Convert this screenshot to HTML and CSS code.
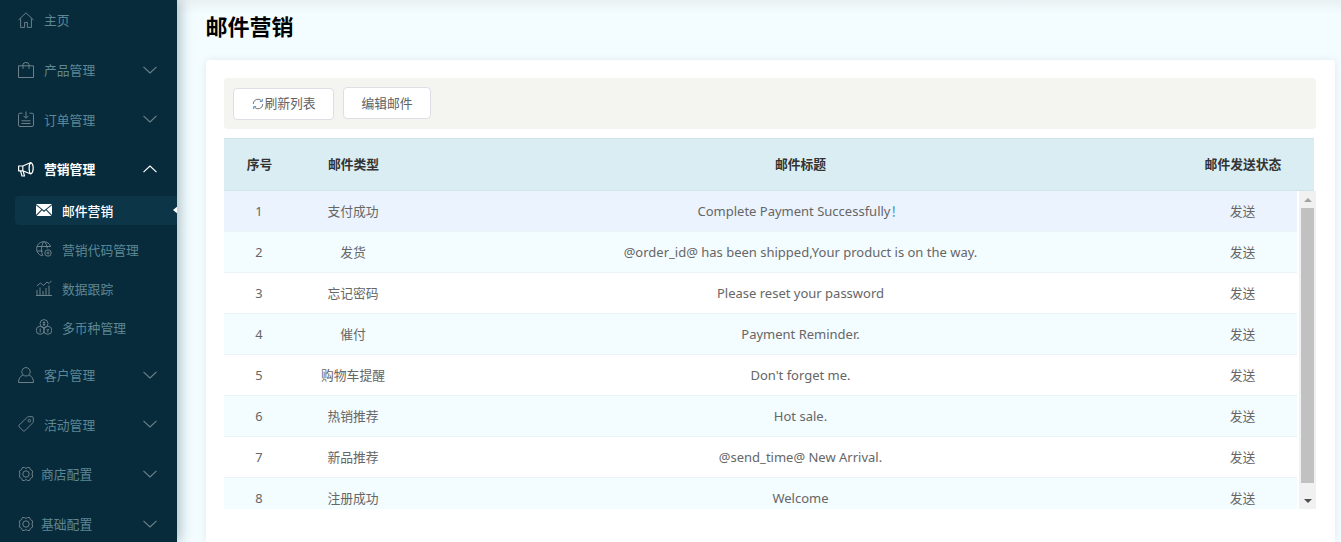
FILE: index.html
```html
<!DOCTYPE html>
<html lang="zh-CN">
<head>
  <meta charset="UTF-8">
  <title>邮件营销</title>
  <link rel="stylesheet" href="styles.css">
</head>
<body>

<div class="sidebar">
  <ul class="menu">
    <li class="menu-item">
      <svg class="icon" viewBox="0 0 16 16"><path d="M.5 8 8 .8 15.500 8M2.600 6.400v9h4v-5h2.800v5h4v-9"/></svg>
      <span>主页</span>
    </li>
    <li class="menu-item">
      <svg class="icon" viewBox="0 0 16 16"><path d="M.5 3.800h15v11.700H.5zM5 6.800V2.500Q5 .5 8 .5t3 2v4.300"/></svg>
      <span>产品管理</span>
      <svg class="arrow" viewBox="0 0 14 8"><path d="M.5.800 7 7 13.500.800"/></svg>
    </li>
    <li class="menu-item">
      <svg class="icon" viewBox="0 0 16 16"><path d="M4.500 2.200H2Q.5 2.200.5 3.600v10.500q0 1.400 1.500 1.400h12q1.500 0 1.500-1.400V3.600q0-1.400-1.500-1.400h-2.500M8 .5v6.500M5.500 4.800 8 7.300l2.500-2.500M3.500 9.800h9M3.500 12.500h9"/></svg>
      <span>订单管理</span>
      <svg class="arrow" viewBox="0 0 14 8"><path d="M.5.800 7 7 13.500.800"/></svg>
    </li>
    <li class="menu-item open">
      <svg class="icon" viewBox="0 0 16 16"><path d="M.6 5h4.200v4.800H.6zM4.800 5l8-3.500q2.400 1.400 2.400 5.700t-2.400 5.800l-8-3.200zM12.800 1.500q-1.700 1.400-1.700 5.700t1.700 5.800M2.500 9.800 4 15h2.500L5.200 10.200"/></svg>
      <span>营销管理</span>
      <svg class="arrow" viewBox="0 0 14 8"><path d="M.5 7.200 7 1l6.500 6.200"/></svg>
    </li>
    <ul class="submenu">
      <li class="sub-item active">
        <svg class="sub-icon" viewBox="0 0 16 12"><path class="fill" d="M0 0h16L8 6.500zM0 1.300v9.700l5.300-5.400zM16 1.300v9.700l-5.300-5.400zM6 6.300 8 8l2-1.700 5.400 5.700H.6z"/></svg>
        <span>邮件营销</span>
      </li>
      <li class="sub-item">
        <svg class="sub-icon" viewBox="0 0 16 16"><path d="M14.800 6A7.200 7.200 0 1 0 6 14.800M.8 5.500h13.400M.8 10h6M7.500.8Q3.500 8 7 15M8.500.8q2.500 2.500 2.800 6.500"/><circle cx="12" cy="12" r="3.200"/><circle cx="12" cy="12" r="1"/></svg>
        <span>营销代码管理</span>
      </li>
      <li class="sub-item">
        <svg class="sub-icon" viewBox="0 0 16 16"><path d="M0 15.500h16M1 15v-5M4 15V7.500M7 15v-4M10 15V8M13 15V5.500M.8 6l3.700-3 3 2.500L11 2l2 1.500L15.500.8"/></svg>
        <span>数据跟踪</span>
      </li>
      <li class="sub-item">
        <svg class="sub-icon" viewBox="0 0 16 16"><circle cx="8" cy="4.600" r="4"/><circle cx="4.200" cy="11.300" r="4"/><circle cx="11.800" cy="11.300" r="4"/><path d="M6.800 3.500h2.400M6.800 5.500h2.400M8 2.500v4.500M4.200 9.500v4M10.800 10l1 1.500 1-1.500M11.800 11.500v2"/></svg>
        <span>多币种管理</span>
      </li>
    </ul>
    <li class="menu-item">
      <svg class="icon" viewBox="0 0 16 16"><circle cx="8" cy="4.800" r="4.200"/><path d="M5 8q-4.500 2-4.500 7.500h15Q15.500 10 11 8"/></svg>
      <span>客户管理</span>
      <svg class="arrow" viewBox="0 0 14 8"><path d="M.5.800 7 7 13.500.800"/></svg>
    </li>
    <li class="menu-item">
      <svg class="icon" viewBox="0 0 16 16"><path d="M1 9.200 9.300 1.200q.5-.5 1.200-.5h3.700q1.100 0 1.100 1.100v3.700q0 .7-.5 1.200L6.800 14.800q-.8.800-1.600 0L1 10.700q-.7-.7 0-1.500z"/><circle cx="11.300" cy="4.700" r="1.300"/></svg>
      <span>活动管理</span>
      <svg class="arrow" viewBox="0 0 14 8"><path d="M.5.800 7 7 13.500.800"/></svg>
    </li>
    <li class="menu-item tight">
      <svg class="icon" viewBox="0 0 16 16"><path class="gear" d="M4.500 1.500h2l1.500 1 1.500-1h2l1 2.200 2.200 1.300-.6 3 .6 3-2.200 1.300-1 2.200h-2l-1.500-1-1.500 1h-2l-1-2.200L1.300 11l.6-3-.6-3 2.200-1.300z"/><circle cx="8" cy="8" r="3.200"/></svg>
      <span>商店配置</span>
      <svg class="arrow" viewBox="0 0 14 8"><path d="M.5.800 7 7 13.500.800"/></svg>
    </li>
    <li class="menu-item tight">
      <svg class="icon" viewBox="0 0 16 16"><path class="gear" d="M4.500 1.500h2l1.500 1 1.500-1h2l1 2.200 2.200 1.300-.6 3 .6 3-2.200 1.300-1 2.200h-2l-1.500-1-1.500 1h-2l-1-2.200L1.300 11l.6-3-.6-3 2.200-1.300z"/><circle cx="8" cy="8" r="3.200"/></svg>
      <span>基础配置</span>
      <svg class="arrow" viewBox="0 0 14 8"><path d="M.5.800 7 7 13.500.800"/></svg>
    </li>
  </ul>
</div>

<div class="main">
  <h1 class="page-title">邮件营销</h1>

  <div class="card">
    <div class="toolbar">
      <button class="btn first">
        <svg class="refresh" viewBox="0 0 12 12"><path d="M1.200 6a4.800 4.800 0 0 1 8.300-3.300"/><path d="M10.800 6a4.800 4.800 0 0 1-8.300 3.300"/><path class="tip" d="M10.300.9v2.500H7.800M1.700 11.100V8.600h2.500"/></svg>刷新列表
      </button>
      <button class="btn">编辑邮件</button>
    </div>

    <div class="table-head">
      <table>
        <colgroup><col class="col-no"><col class="col-type"><col class="col-title"><col class="col-status"></colgroup>
        <tr><th>序号</th><th>邮件类型</th><th>邮件标题</th><th>邮件发送状态</th></tr>
      </table>
    </div>

    <div class="table-wrap">
      <div class="table-body">
        <table>
          <colgroup><col class="col-no"><col class="col-type"><col class="col-title"><col class="col-status"></colgroup>
          <tr class="current"><td class="num">1</td><td>支付成功</td><td class="subject">Complete Payment Successfully<span class="mark">！</span></td><td>发送</td></tr>
          <tr class="even"><td class="num">2</td><td>发货</td><td class="subject">@order_id@ has been shipped,Your product is on the way.</td><td>发送</td></tr>
          <tr><td class="num">3</td><td>忘记密码</td><td class="subject">Please reset your password</td><td>发送</td></tr>
          <tr class="even"><td class="num">4</td><td>催付</td><td class="subject">Payment Reminder.</td><td>发送</td></tr>
          <tr><td class="num">5</td><td>购物车提醒</td><td class="subject">Don't forget me.</td><td>发送</td></tr>
          <tr class="even"><td class="num">6</td><td>热销推荐</td><td class="subject">Hot sale.</td><td>发送</td></tr>
          <tr><td class="num">7</td><td>新品推荐</td><td class="subject">@send_time@ New Arrival.</td><td>发送</td></tr>
          <tr class="even"><td class="num">8</td><td>注册成功</td><td class="subject">Welcome</td><td>发送</td></tr>
        </table>
      </div>
      <div class="scrollbar">
        <div class="sb-btn"><i class="sb-up"></i></div>
        <div class="sb-thumb"></div>
        <div class="sb-rest"></div>
        <div class="sb-btn"><i class="sb-down"></i></div>
      </div>
    </div>
  </div>
</div>

</body>
</html>
```

FILE: styles.css
```css
* {
  box-sizing: border-box;
}
html, body {
  height: 100%;
}
body {
  margin: 0;
  display: flex;
  overflow: hidden;
  background-color: #f3fdff;
  font-family: "Noto Sans", "Noto Sans CJK SC", sans-serif;
  font-size: 12.8px;
  color: #666;
}

/* sidebar */
.sidebar {
  width: 177px;
  flex-shrink: 0;
  overflow: hidden;
  background-color: #072b3a;
  color: #5d8795;
  box-shadow: 3px 0 12px rgba(7, 43, 58, 0.3);
  z-index: 1;
}
.menu, .submenu {
  list-style: none;
  margin: 0;
  padding: 0;
}
.menu {
  margin-top: -5px;
}
.menu-item {
  height: 49.7px;
  padding-left: 18px;
  display: flex;
  align-items: center;
}
.menu-item span {
  margin-left: 10px;
}
.menu-item.tight span {
  margin-left: 7px;
}
.menu-item.open {
  color: #fff;
  font-weight: bold;
}
.icon, .sub-icon, .arrow {
  flex-shrink: 0;
  fill: none;
  stroke: #6c808a;
  stroke-width: 1;
  stroke-linejoin: round;
}
.icon {
  width: 16px;
  height: 16px;
}
.arrow {
  width: 14px;
  height: 8px;
  margin-left: auto;
  margin-right: 20px;
  stroke-width: 1.1;
}
.open .icon, .open .arrow {
  stroke: #fff;
}
.open .icon {
  stroke-width: 1.2;
}
.submenu {
  padding: 2px 0 8px 15px;
}
.sub-item {
  position: relative;
  height: 29px;
  margin-bottom: 10px;
  padding-left: 21px;
  border-radius: 4px 0 0 4px;
  display: flex;
  align-items: center;
}
.sub-item:last-child {
  margin-bottom: 0;
}
.sub-item span {
  margin-left: 10px;
}
.sub-icon {
  width: 16px;
  height: 16px;
}
.sub-item.active {
  background-color: #0c3548;
  color: #fff;
  font-weight: 500;
}
.sub-item.active::after {
  content: "";
  position: absolute;
  right: -1px;
  top: 10px;
  border: 4px solid transparent;
  border-right: 5px solid #fff;
  border-left: 0;
}
.sub-icon .fill {
  fill: #fff;
  stroke: none;
}

/* main */
.main {
  flex: 1;
  min-width: 0;
  padding: 0 6px 0 29px;
  display: flex;
  flex-direction: column;
  background: linear-gradient(#e9f1f3, #f3fdff 14px);
}
.page-title {
  margin: 0 0 0 -0.5px;
  height: 60px;
  padding-top: 8px;
  font-size: 22px;
  line-height: 36px;
  color: #000;
}
.card {
  flex: 1;
  padding: 18px 19px 0 18px;
  background-color: #fff;
  border-radius: 4px 4px 0 0;
  box-shadow: 0 0 8px rgba(0, 0, 0, 0.08);
}
.toolbar {
  height: 51px;
  padding: 9px;
  margin-bottom: 9px;
  display: flex;
  gap: 9px;
  align-items: flex-start;
  background-color: #f4f4f0;
  border-radius: 4px;
}
.btn {
  width: 88px;
  height: 32px;
  padding: 0 0 2px;
  background-color: #fff;
  border: 1px solid #dcdfe6;
  border-radius: 4px;
  font: inherit;
  color: #606266;
}
.btn.first {
  width: 101px;
  margin-top: 1px;
  padding: 0 0 4px 1px;
}
.refresh {
  width: 12px;
  height: 12px;
  vertical-align: -2px;
  fill: none;
  stroke: #777;
  stroke-width: 1;
}
.refresh .tip {
  stroke: #4a90c8;
}

/* table */
table {
  width: 100%;
  table-layout: fixed;
  border-collapse: separate;
  border-spacing: 0;
}
.col-no {
  width: 70px;
}
.col-type {
  width: 118px;
}
.col-title {
  width: 776px;
}
.col-status {
  width: 109px;
}
.table-head {
  width: 1090px;
  padding-right: 17px;
  background-color: #daedf3;
  border-top: 1px solid #cfe3ea;
  border-bottom: 1px solid #cfe3ea;
}
th {
  height: 51px;
  padding: 0 0 2px 1px;
  color: #333;
  text-align: center;
  white-space: nowrap;
}
.table-wrap {
  height: 318px;
  display: flex;
}
.table-body {
  width: 1073px;
  overflow: hidden;
}
td {
  height: 41px;
  padding: 0 0 2px;
  text-align: center;
  white-space: nowrap;
  border-bottom: 1px solid #ebf3f6;
}
td.num {
  padding: 0;
}
td.subject {
  padding: 0 0 0 1px;
  font-size: 13px;
  line-height: 18px;
}
.mark {
  line-height: 0;
  color: #4a90c8;
}
tr.even td {
  background-color: #f3fcff;
}
tr.current td {
  background-color: #ebf3fe;
}

/* scrollbar drawn by hand */
.scrollbar {
  width: 17px;
  margin-left: 2px;
  display: flex;
  flex-direction: column;
  background-color: #f1f1f1;
}
.sb-btn {
  height: 17px;
  display: flex;
  align-items: center;
  justify-content: center;
}
.sb-up, .sb-down {
  border-left: 4px solid transparent;
  border-right: 4px solid transparent;
}
.sb-up {
  border-bottom: 4px solid #a3a3a3;
}
.sb-down {
  border-top: 4px solid #505050;
}
.sb-thumb {
  height: 275px;
  margin: 0 2px;
  background-color: #c1c1c1;
}
.sb-rest {
  flex: 1;
}
```
